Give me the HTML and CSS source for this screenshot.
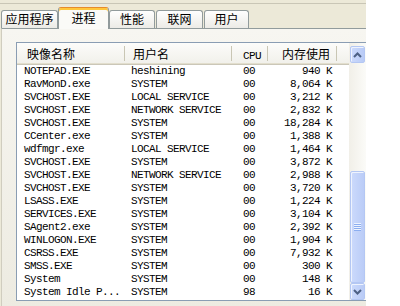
FILE: index.html
```html
<!DOCTYPE html>
<html>
<head>
<meta charset="utf-8">
<link rel="stylesheet" href="styles.css">
</head>
<body>
<div class="window">
  <div class="menuline"></div>
  <div class="tabs">
    <div class="tab t1">应用程序</div>
    <div class="tab sel">进程</div>
    <div class="tab t3">性能</div>
    <div class="tab t4">联网</div>
    <div class="tab t5">用户</div>
  </div>
  <div class="panel">
    <div class="list">
      <div class="main">
        <div class="header">
          <div class="hc c1">映像名称</div>
          <div class="hc c2">用户名</div>
          <div class="hc c3 mono">CPU</div>
          <div class="hc c4">内存使用</div>
          <div class="hc c5"></div>
        </div>
        <div class="rows mono">
          <div class="row"><span class="c1">NOTEPAD.EXE</span><span class="c2">heshining</span><span class="c3">00</span><span class="c4">940 K</span></div>
          <div class="row"><span class="c1">RavMonD.exe</span><span class="c2">SYSTEM</span><span class="c3">00</span><span class="c4">8,064 K</span></div>
          <div class="row"><span class="c1">SVCHOST.EXE</span><span class="c2">LOCAL SERVICE</span><span class="c3">00</span><span class="c4">3,212 K</span></div>
          <div class="row"><span class="c1">SVCHOST.EXE</span><span class="c2">NETWORK SERVICE</span><span class="c3">00</span><span class="c4">2,832 K</span></div>
          <div class="row"><span class="c1">SVCHOST.EXE</span><span class="c2">SYSTEM</span><span class="c3">00</span><span class="c4">18,284 K</span></div>
          <div class="row"><span class="c1">CCenter.exe</span><span class="c2">SYSTEM</span><span class="c3">00</span><span class="c4">1,388 K</span></div>
          <div class="row"><span class="c1">wdfmgr.exe</span><span class="c2">LOCAL SERVICE</span><span class="c3">00</span><span class="c4">1,464 K</span></div>
          <div class="row"><span class="c1">SVCHOST.EXE</span><span class="c2">SYSTEM</span><span class="c3">00</span><span class="c4">3,872 K</span></div>
          <div class="row"><span class="c1">SVCHOST.EXE</span><span class="c2">NETWORK SERVICE</span><span class="c3">00</span><span class="c4">2,988 K</span></div>
          <div class="row"><span class="c1">SVCHOST.EXE</span><span class="c2">SYSTEM</span><span class="c3">00</span><span class="c4">3,720 K</span></div>
          <div class="row"><span class="c1">LSASS.EXE</span><span class="c2">SYSTEM</span><span class="c3">00</span><span class="c4">1,224 K</span></div>
          <div class="row"><span class="c1">SERVICES.EXE</span><span class="c2">SYSTEM</span><span class="c3">00</span><span class="c4">3,104 K</span></div>
          <div class="row"><span class="c1">SAgent2.exe</span><span class="c2">SYSTEM</span><span class="c3">00</span><span class="c4">2,392 K</span></div>
          <div class="row"><span class="c1">WINLOGON.EXE</span><span class="c2">SYSTEM</span><span class="c3">00</span><span class="c4">1,904 K</span></div>
          <div class="row"><span class="c1">CSRSS.EXE</span><span class="c2">SYSTEM</span><span class="c3">00</span><span class="c4">7,932 K</span></div>
          <div class="row"><span class="c1">SMSS.EXE</span><span class="c2">SYSTEM</span><span class="c3">00</span><span class="c4">300 K</span></div>
          <div class="row"><span class="c1">System</span><span class="c2">SYSTEM</span><span class="c3">00</span><span class="c4">148 K</span></div>
          <div class="row"><span class="c1">System Idle P...</span><span class="c2">SYSTEM</span><span class="c3">98</span><span class="c4">16 K</span></div>
        </div>
      </div>
      <div class="scrollbar">
        <div class="sbtn up"><svg width="9" height="6" viewBox="0 0 9 6"><path d="M1 5 L4.5 1.5 L8 5" fill="none" stroke="#4D6185" stroke-width="2"/></svg></div>
        <div class="track"></div>
        <div class="thumb"><span class="grip"></span></div>
        <div class="sbtn down"><svg width="9" height="6" viewBox="0 0 9 6"><path d="M1 1 L4.5 4.5 L8 1" fill="none" stroke="#4D6185" stroke-width="2"/></svg></div>
      </div>
    </div>
  </div>
</div>
</body>
</html>
```
FILE: styles.css
```css
body {
  margin: 0;
  background: #ffffff;
}

.window {
  width: 366px;
  height: 306px;
  background: #ECE9D8;
  overflow: hidden;
  font-family: "Noto Sans CJK SC", sans-serif;
  font-size: 12px;
  color: #000;
}

.menuline {
  height: 3px;
  border-bottom: 1px solid #C9C6B6;
}

.tabs {
  display: flex;
  align-items: flex-end;
  height: 24px;
  padding-left: 1px;
}

.tab {
  box-sizing: border-box;
  height: 18px;
  border: 1px solid #919B9C;
  border-bottom: 0;
  border-radius: 3px 3px 0 0;
  background: linear-gradient(#FEFEFE, #ECEBE6);
  line-height: 16px;
  text-align: center;
  white-space: nowrap;
}

.t1 { width: 57px; }
.t3 { width: 46px; }
.t4 { width: 47px; margin-left: 1px; }
.t5 { width: 45px; margin-left: 1px; }

.tab.sel {
  position: relative;
  z-index: 2;
  width: 51px;
  height: 22px;
  margin-bottom: -1px;
  padding-top: 2px;
  border-top: 1px solid #E68B2C;
  box-shadow: inset 0 2px 0 #FFC73C;
  background: #FAFAF7;
}

.panel {
  box-sizing: border-box;
  margin-left: 1px;
  width: 400px;
  height: 280px;
  border-top: 1px solid #919B9C;
  border-left: 1px solid #D0CDBF;
  background: linear-gradient(#F7F6F1, #EDEBE1);
  padding: 13px 0 0 14px;
}

.list {
  display: flex;
  width: 349px;
  height: 257px;
  border: 1px solid #8A9DB3;
  background: #ffffff;
}

.main {
  width: 332px;
  display: flex;
  flex-direction: column;
}

.header {
  display: grid;
  grid-template-columns: 108px 107px 36px 69px 12px;
  height: 22px;
  box-sizing: border-box;
  border-bottom: 1px solid #CBC7B8;
  box-shadow: inset 0 -1px 0 #E2DECD;
  background: linear-gradient(#FCFCFA, #F1F0EA);
}

.hc {
  height: 20px;
  line-height: 19px;
  padding-top: 1px;
  white-space: nowrap;
  background: linear-gradient(#C9C6B4, #C9C6B4) no-repeat right 0 top 3px / 1px 15px;
}

.hc.c1 { padding-left: 10px; }
.hc.c2 { padding-left: 8px; }
.hc.c3 {
  padding-left: 11px;
  padding-top: 6px;
  height: 15px;
  line-height: 14px;
}
.hc.c4 {
  text-align: right;
  padding-right: 7px;
}
.hc.c5 { background: none; }

.mono {
  font-family: "Liberation Mono", monospace;
  font-size: 11px;
  letter-spacing: -0.6px;
}

.rows {
  display: flex;
  flex-direction: column;
}

.row {
  display: grid;
  grid-template-columns: 108px 107px 36px 69px;
  height: 13px;
  line-height: 13px;
  white-space: nowrap;
}

.row .c1 { padding-left: 7px; }
.row .c2 { padding-left: 6px; }
.row .c3 { padding-left: 11px; }
.row .c4 { text-align: right; padding-right: 5px; }

.scrollbar {
  width: 17px;
  display: flex;
  flex-direction: column;
  align-items: center;
  padding-top: 3px;
  background: linear-gradient(to right, #F1EFE8, #FBFBF8);
}

.sbtn {
  box-sizing: border-box;
  width: 15px;
  height: 17px;
  border: 1px solid #B4C7F3;
  border-radius: 2px;
  background: linear-gradient(to right, #CCDAFC, #B9CBF6);
  box-shadow: inset 1px 1px 0 #EEF3FE;
  display: flex;
  align-items: center;
  justify-content: center;
}

.track {
  height: 108px;
}

.thumb {
  box-sizing: border-box;
  width: 15px;
  height: 112px;
  border: 1px solid #B4C7F3;
  border-radius: 2px;
  background: linear-gradient(to right, #CCDAFC, #BACCF7);
  box-shadow: inset 1px 1px 0 #EEF3FE;
  display: flex;
  align-items: center;
  justify-content: center;
}

.grip {
  width: 7px;
  height: 8px;
  background: repeating-linear-gradient(to bottom, #EEF4FE 0 1px, #8CAEF0 1px 2px);
}
```
